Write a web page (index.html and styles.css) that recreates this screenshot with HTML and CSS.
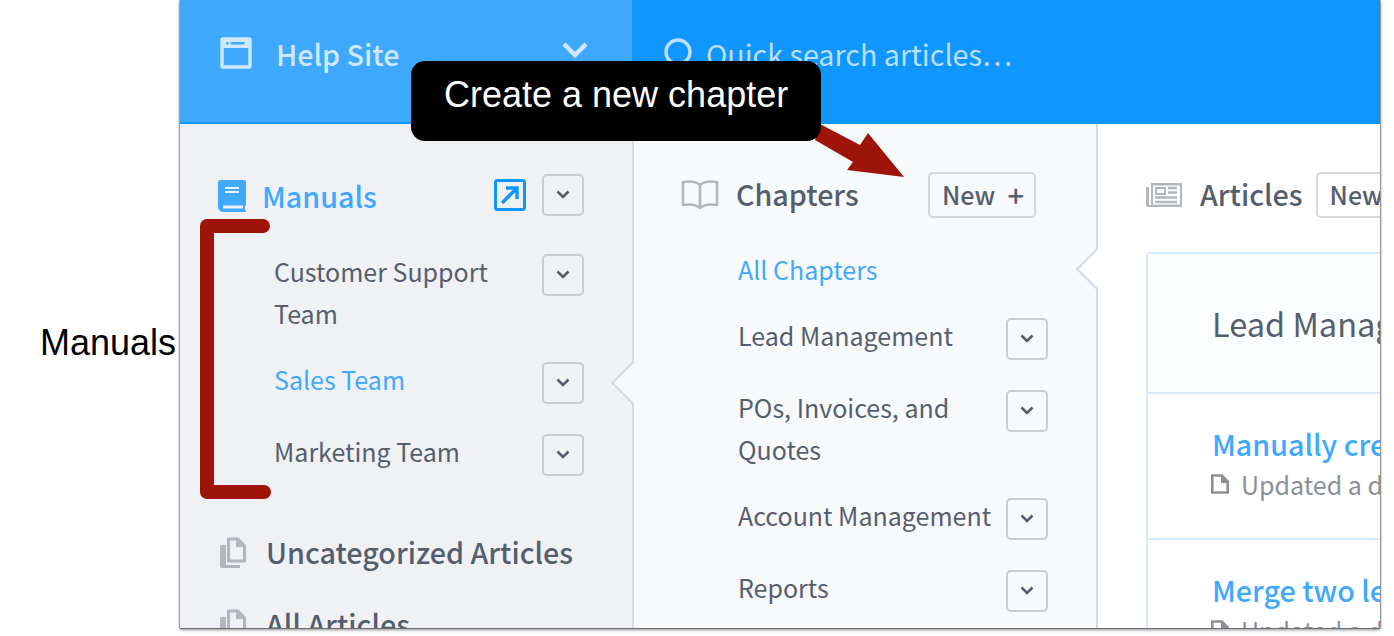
FILE: index.html
```html
<!DOCTYPE html>
<html lang="en">
<head>
<meta charset="utf-8">
<title>Help Site</title>
<link rel="stylesheet" href="styles.css">
</head>
<body>
<div class="window">
  <header class="topbar">
    <div class="site">
      <svg class="site-icon" width="34" height="34" viewBox="0 0 34 34"><rect x="2" y="2" width="28" height="28" fill="none" stroke="currentColor" stroke-width="3.4" rx="1"/><rect x="2" y="2" width="28" height="9" fill="currentColor"/><rect x="6" y="5" width="2.5" height="2.5" fill="#3fa9ff"/><rect x="10.5" y="5" width="14" height="2.5" fill="#3fa9ff"/></svg>
      <span class="site-name">Help Site</span>
      <svg class="site-caret" width="26" height="16" viewBox="0 0 26 16"><path d="M2 2l11 11L24 2" fill="none" stroke="currentColor" stroke-width="4.4"/></svg>
    </div>
    <div class="search">
      <svg class="search-icon" width="32" height="32" viewBox="0 0 32 32"><circle cx="15" cy="15" r="12" fill="none" stroke="currentColor" stroke-width="3.4"/></svg>
      <span>Quick search articles…</span>
    </div>
  </header>
  <div class="columns">
    <aside class="col sidebar">
      <div class="head-row">
        <svg class="book-icon" width="28" height="32" viewBox="0 0 28 32"><path d="M3 0h23a2 2 0 0 1 2 2v23l-1 1v4l1 1v1H5a5 5 0 0 1-5-5V3a3 3 0 0 1 3-3z" fill="#3fa9ff"/><path d="M7 8h14M7 12h14" stroke="#f0f1f4" stroke-width="2"/><path d="M5 27h20" stroke="#f0f1f4" stroke-width="3"/></svg>
        <span class="heading heading-blue">Manuals</span>
        <svg class="open-icon" width="32" height="32" viewBox="0 0 32 32"><rect x="1.5" y="1.5" width="29" height="29" rx="2" fill="none" stroke="#1096ff" stroke-width="3"/><path d="M8 24L22 10M12 9h11v11" fill="none" stroke="#1096ff" stroke-width="3.4"/></svg>
        <button class="caret"><svg width="14" height="10" viewBox="0 0 14 10"><path d="M1.5 1.5L7 7l5.5-5.5" fill="none" stroke="currentColor" stroke-width="2.6"/></svg></button>
      </div>
      <ul class="list">
        <li class="row"><span class="row-text">Customer Support Team</span><button class="caret"><svg width="14" height="10" viewBox="0 0 14 10"><path d="M1.5 1.5L7 7l5.5-5.5" fill="none" stroke="currentColor" stroke-width="2.6"/></svg></button></li>
        <li class="row"><span class="row-text link">Sales Team</span><button class="caret"><svg width="14" height="10" viewBox="0 0 14 10"><path d="M1.5 1.5L7 7l5.5-5.5" fill="none" stroke="currentColor" stroke-width="2.6"/></svg></button><i class="notch notch-side"></i></li>
        <li class="row"><span class="row-text">Marketing Team</span><button class="caret"><svg width="14" height="10" viewBox="0 0 14 10"><path d="M1.5 1.5L7 7l5.5-5.5" fill="none" stroke="currentColor" stroke-width="2.6"/></svg></button></li>
      </ul>
      <div class="nav-link">
        <svg class="docs-icon" width="28" height="32" viewBox="0 0 28 32"><path d="M2 8h5v20h14v3H3a2 2 0 0 1-2-2V9z" fill="#b3b6bd"/><path d="M9.500 2h9l7 7v15h-16z" fill="none" stroke="#b3b6bd" stroke-width="3.2" stroke-linejoin="round"/><path d="M17 1l9 9h-9z" fill="#b3b6bd"/></svg>
        <span class="heading">Uncategorized Articles</span>
      </div>
      <div class="nav-link">
        <svg class="docs-icon" width="28" height="32" viewBox="0 0 28 32"><path d="M2 8h5v20h14v3H3a2 2 0 0 1-2-2V9z" fill="#b3b6bd"/><path d="M9.500 2h9l7 7v15h-16z" fill="none" stroke="#b3b6bd" stroke-width="3.2" stroke-linejoin="round"/><path d="M17 1l9 9h-9z" fill="#b3b6bd"/></svg>
        <span class="heading">All Articles</span>
      </div>
    </aside>
    <section class="col chapters">
      <div class="head-row">
        <svg class="open-book" width="38" height="32" viewBox="0 0 38 32"><path d="M19 6C15 2 8 2 2 3v23c6-1 12-1 17 3 5-4 11-4 17-3V3c-6-1-13-1-17 3zM19 6v23" fill="none" stroke="#b3b6bd" stroke-width="2.6" stroke-linejoin="round"/></svg>
        <span class="heading">Chapters</span>
        <button class="new-btn">New<span class="plus">+</span></button>
      </div>
      <ul class="list">
        <li class="row row-plain"><span class="row-text link">All Chapters</span><i class="notch notch-chap"></i></li>
        <li class="row"><span class="row-text">Lead Management</span><button class="caret"><svg width="14" height="10" viewBox="0 0 14 10"><path d="M1.5 1.5L7 7l5.5-5.5" fill="none" stroke="currentColor" stroke-width="2.6"/></svg></button></li>
        <li class="row"><span class="row-text">POs, Invoices, and Quotes</span><button class="caret"><svg width="14" height="10" viewBox="0 0 14 10"><path d="M1.5 1.5L7 7l5.5-5.5" fill="none" stroke="currentColor" stroke-width="2.6"/></svg></button></li>
        <li class="row"><span class="row-text">Account Management</span><button class="caret"><svg width="14" height="10" viewBox="0 0 14 10"><path d="M1.5 1.5L7 7l5.5-5.5" fill="none" stroke="currentColor" stroke-width="2.6"/></svg></button></li>
        <li class="row"><span class="row-text">Reports</span><button class="caret"><svg width="14" height="10" viewBox="0 0 14 10"><path d="M1.5 1.5L7 7l5.5-5.5" fill="none" stroke="currentColor" stroke-width="2.6"/></svg></button></li>
      </ul>
    </section>
    <section class="col articles">
      <div class="head-row">
        <svg class="news-icon" width="38" height="26" viewBox="0 0 38 26"><path d="M6 1h31v24H3a2 2 0 0 1-2-2V5h3v18h2z" fill="#b3b6bd"/><rect x="8" y="3.500" width="27" height="19" fill="#fff"/><path d="M11 6h9v6h-9z" fill="none" stroke="#b3b6bd" stroke-width="2"/><path d="M23 6h9M23 10.500h9M10 15.500h22M10 20h22" stroke="#b3b6bd" stroke-width="2.400"/></svg>
        <span class="heading">Articles</span>
        <button class="new-btn">New<span class="plus">+</span></button>
      </div>
      <div class="card">
        <div class="card-head">Lead Management</div>
        <div class="article">
          <a class="article-title">Manually create a new lead</a>
          <div class="article-meta"><svg width="18" height="20" viewBox="0 0 18 20"><path d="M1.300 1.500h9.500l5.900 6v11H1.300z" fill="none" stroke="currentColor" stroke-width="2.600"/><path d="M10 1l8 8h-8z" fill="currentColor"/></svg><span>Updated a day ago</span></div>
        </div>
        <div class="article">
          <a class="article-title">Merge two leads</a>
          <div class="article-meta"><svg width="18" height="20" viewBox="0 0 18 20"><path d="M1.300 1.500h9.500l5.900 6v11H1.300z" fill="none" stroke="currentColor" stroke-width="2.600"/><path d="M10 1l8 8h-8z" fill="currentColor"/></svg><span>Updated a day ago</span></div>
        </div>
      </div>
    </section>
  </div>
</div>
<svg class="annotation" width="1394" height="636" viewBox="0 0 1394 636"><path d="M263 226H207V492H264" fill="none" stroke="#9e1409" stroke-width="14" stroke-linejoin="round" stroke-linecap="round"/><path d="M820 124L860 145L868 133L904 177L847 170L853 162L815 140z" fill="#9e1409"/></svg>
<div class="callout">Create a new chapter</div>
<div class="side-label">Manuals</div>
</body>
</html>
```
FILE: styles.css
```css
* { box-sizing: border-box; }
html, body { margin: 0; height: 100%; }
body {
  position: relative;
  background: #fff;
  overflow: hidden;
  padding-left: 180px;
  font-family: "Noto Sans CJK SC", "Noto Sans", sans-serif;
  color: #555e6e;
}
.window {
  width: 1200px;
  height: 628px;
  overflow: hidden;
  display: flex;
  flex-direction: column;
  background: #fff;
  box-shadow: 0 1px 0 #6b6d70, 0 2px 3px rgba(0,0,0,.45), 1px 0 1px rgba(0,0,0,.3), -1px 0 1px rgba(0,0,0,.25);
}
.topbar {
  flex: 0 0 124px;
  display: flex;
  background: #1096ff;
}
.site {
  flex: none;
  width: 454px;
  padding: 0 44px 16px 40px;
  display: flex;
  align-items: center;
  background: #3fa9ff;
  border-bottom: 2px solid #1096ff;
  border-right: 2px solid #1096ff;
  color: #cfe8ff;
}
.site-icon { flex: none; margin: 2px 23px 0 0; }
.site-name { flex: 1; font-size: 28.7px; font-weight: 500; line-height: 42px; margin: 2px 0 0 -1px; }
.site-caret { flex: none; margin-bottom: 6px; }
.search {
  display: flex;
  align-items: center;
  padding: 0 0 16px 29px;
  color: #bcdfff;
  font-size: 28.7px;
  line-height: 42px;
}
.search-icon { margin-right: 11px; margin-bottom: 2px; }
.columns { flex: 1; display: flex; min-height: 0; }
.col { flex: none; padding-top: 50px; }
.sidebar {
  width: 454px;
  background: #f0f1f4;
  border-right: 2px solid #d3dae3;
  padding-left: 38px;
  padding-right: 48px;
}
.chapters {
  width: 464px;
  background: #f8f9fb;
  border-right: 2px solid #d3dae3;
  padding-left: 47px;
  padding-right: 48px;
}
.articles { flex: 1; padding-left: 47px; min-width: 0; }
.head-row {
  display: flex;
  align-items: center;
  height: 42px;
}
.heading { font-size: 28.7px; font-weight: 500; line-height: 42px; white-space: nowrap; }
.chapters .heading, .articles .heading { position: relative; top: -1px; }
.heading-blue { color: #3fa9ff; flex: 1; padding-top: 2px; }
.book-icon { flex: none; margin-right: 16px; margin-top: 2px; }
.open-icon { flex: none; margin-right: 16px; }
.caret {
  flex: none;
  width: 42px;
  height: 42px;
  padding: 0;
  display: flex;
  align-items: center;
  justify-content: center;
  background: transparent;
  border: 2px solid #c9ccd2;
  border-radius: 5px;
  color: #555e6e;
}
.list { list-style: none; margin: 0; padding: 24px 0 24px 56px; }
.chapters .list { padding: 22px 0 0 57px; }
.row { position: relative; display: flex; justify-content: space-between; gap: 14px; }
.row-text { padding: 10px 0 14px; font-size: 25px; line-height: 42px; }
.row .caret { margin: 14px 0 16px; }
.link { color: #3fa9ff; }
.notch {
  position: absolute;
  width: 30px;
  height: 30px;
  transform: rotate(45deg);
  border-left: 2px solid #d3dae3;
  border-bottom: 2px solid #d3dae3;
}
.notch-side { right: -63px; top: 20px; background: #f8f9fb; }
.notch-chap { right: -64px; top: 16px; background: #fff; }
.nav-link {
  display: flex;
  align-items: center;
  height: 72px;
}
.docs-icon { flex: none; margin: 2px 19px 0 1px; }
.open-book { flex: none; margin-right: 17px; }
.new-btn {
  flex: none;
  height: 46px;
  margin-left: auto;
  margin-right: 12px;
  padding: 0 10px 2px 12px;
  width: 108px;
  display: flex;
  align-items: center;
  justify-content: space-between;
  background: transparent;
  border: 2px solid #d4d7dc;
  border-radius: 5px;
  font: 500 25px/42px "Noto Sans CJK SC", "Noto Sans", sans-serif;
  color: #555e6e;
}
.plus { font-size: 29px; }
.news-icon { flex: none; margin-right: 17px; }
.articles .new-btn { margin-left: 13px; }
.card {
  width: 800px;
  margin: 36px 0 0 1px;
  border: 2px solid #d7eafb;
  border-radius: 5px;
}
.card-head {
  height: 140px;
  padding: 0 64px 2px;
  display: flex;
  align-items: center;
  background: #fcfdfe;
  border-bottom: 2px solid #d7eafb;
  font-size: 32.5px;
  white-space: nowrap;
}
.article {
  height: 146px;
  padding: 29px 64px 0;
  border-bottom: 2px solid #d7eafb;
}
.article-title {
  display: block;
  color: #3fa9ff;
  font-size: 28.7px;
  font-weight: 500;
  line-height: 42px;
  white-space: nowrap;
}
.article-meta {
  display: flex;
  align-items: center;
  gap: 12px;
  margin-left: -1px;
  color: #8a8f99;
  font-size: 25px;
  line-height: 38px;
  white-space: nowrap;
}
.annotation { position: absolute; left: 0; top: 0; pointer-events: none; }
.callout {
  position: absolute;
  left: 411px;
  top: 61px;
  width: 410px;
  height: 80px;
  padding-left: 33px;
  background: #000;
  border-radius: 14px;
  color: #fff;
  font: 36px/68px "Liberation Sans", Arial, sans-serif;
}
.side-label {
  position: absolute;
  left: 40px;
  top: 321px;
  color: #000;
  font: 36px/44px "Liberation Sans", Arial, sans-serif;
}
```
